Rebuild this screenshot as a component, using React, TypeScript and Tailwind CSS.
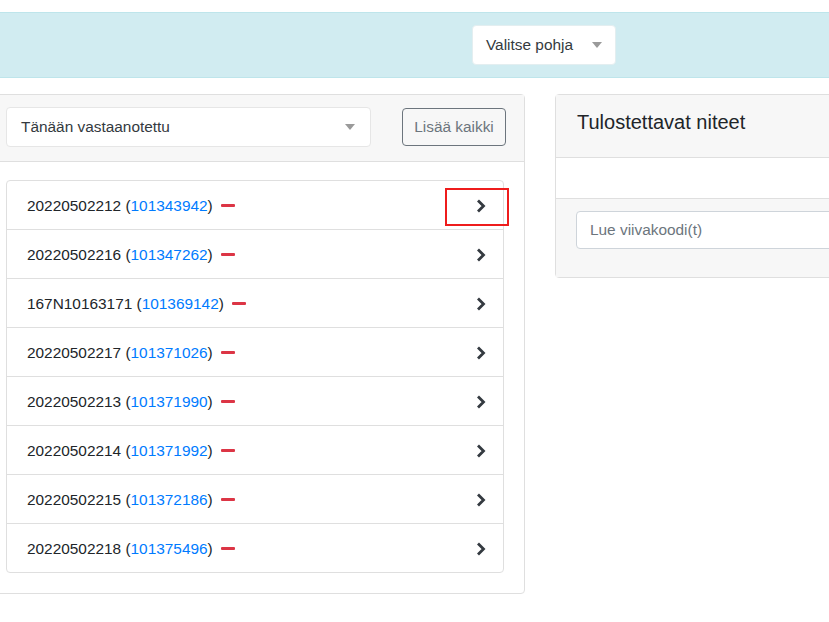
const ROWS = [
  { id: "20220502212", link: "101343942" },
  { id: "20220502216", link: "101347262" },
  { id: "167N10163171", link: "101369142" },
  { id: "20220502217", link: "101371026" },
  { id: "20220502213", link: "101371990" },
  { id: "20220502214", link: "101371992" },
  { id: "20220502215", link: "101372186" },
  { id: "20220502218", link: "101375496" },
];

function Caret() {
  return (
    <svg width="10" height="6" viewBox="0 0 10 6" className="shrink-0">
      <path d="M0 0h10L5 6z" fill="#9a9a9a" />
    </svg>
  );
}

function Chevron() {
  return (
    <svg width="10" height="14" viewBox="0 0 10 14" className="shrink-0">
      <path d="M2 1.5L7.5 7L2 12.5" fill="none" stroke="#343a40" strokeWidth="2.8" strokeLinecap="butt" strokeLinejoin="miter" />
    </svg>
  );
}

export default function App() {
  return (
    <div className="w-[829px] h-[622px] overflow-hidden bg-white text-[#212529] font-['Liberation_Sans','Noto_Sans',sans-serif] text-[15.4px]">
      {/* ── Template bar ───────────────────────────── */}
      <div className="mt-[12px] h-[66px] bg-[#d1ecf1] border-t border-b border-[#bee5eb] flex items-center pl-[472px]">
        <div className="h-[40px] w-[144px] bg-white rounded-[4px] border border-[#e3eef0] flex items-center justify-between px-[13px]">
          <span className="text-[#343a40]">Valitse pohja</span>
          <Caret />
        </div>
      </div>

      {/* ── Cards ──────────────────────────────────── */}
      <div className="flex gap-[30px] ml-[-15px] mt-[16px] items-start">
        {/* Left card */}
        <div className="w-[540px] shrink-0 border border-[#dfdfdf] rounded-[4px] bg-white">
          <div className="bg-[#f7f7f7] border-b border-[#dfdfdf] pl-[20px] pr-[18px] pt-[12px] pb-[14px] flex items-center gap-[31px]">
            <div className="h-[40px] w-[365px] bg-white border border-[#e6e6e6] rounded-[4px] flex items-center justify-between pl-[14px] pr-[15px]">
              <span className="text-[#343a40]">Tänään vastaanotettu</span>
              <Caret />
            </div>
            <button className="h-[38px] w-[104px] border border-[#6c757d] rounded-[4px] text-[#6c757d] bg-transparent">
              Lisää kaikki
            </button>
          </div>
          <div className="pl-[20px] pr-[20px] pt-[18px] pb-[20px]">
            <div className="relative w-[498px] border border-[#dfdfdf] rounded-[4px] bg-white">
              {ROWS.map((r, i) => (
                <div
                  key={r.link}
                  className={`flex items-center justify-between pl-[20px] pr-[17px] pt-[1px] ${i > 0 ? "h-[49px] border-t border-[#dfdfdf]" : "h-[48px]"}`}
                >
                  <div className="flex items-center">
                    <span>
                      {r.id} (<span className="text-[#007bff]">{r.link}</span>)
                    </span>
                    <span className="ml-[8px] w-[14px] h-[3px] bg-[#dc3545] rounded-[1px]" />
                  </div>
                  <Chevron />
                </div>
              ))}
              {/* annotation */}
              <div className="absolute left-[438px] top-[7px] w-[64px] h-[38px] border-2 border-[#ee1c1c]" />
            </div>
          </div>
        </div>

        {/* Right card */}
        <div className="w-[539px] shrink-0 border border-[#dfdfdf] rounded-[4px] bg-white">
          <div className="h-[63px] bg-[#f7f7f7] border-b border-[#dfdfdf] pl-[21px] flex items-center">
            <h5 className="text-[20px] pb-[9px]">Tulostettavat niteet</h5>
          </div>
          <div className="h-[41px] border-b border-[#dfdfdf]" />
          <div className="bg-[#f7f7f7] pl-[20px] pt-[12px] pb-[28px]">
            <div className="h-[38px] bg-white border border-[#ced4da] rounded-[4px] flex items-center pl-[13px] text-[#6c757d]">
              Lue viivakoodi(t)
            </div>
          </div>
        </div>
      </div>
    </div>
  );
}
